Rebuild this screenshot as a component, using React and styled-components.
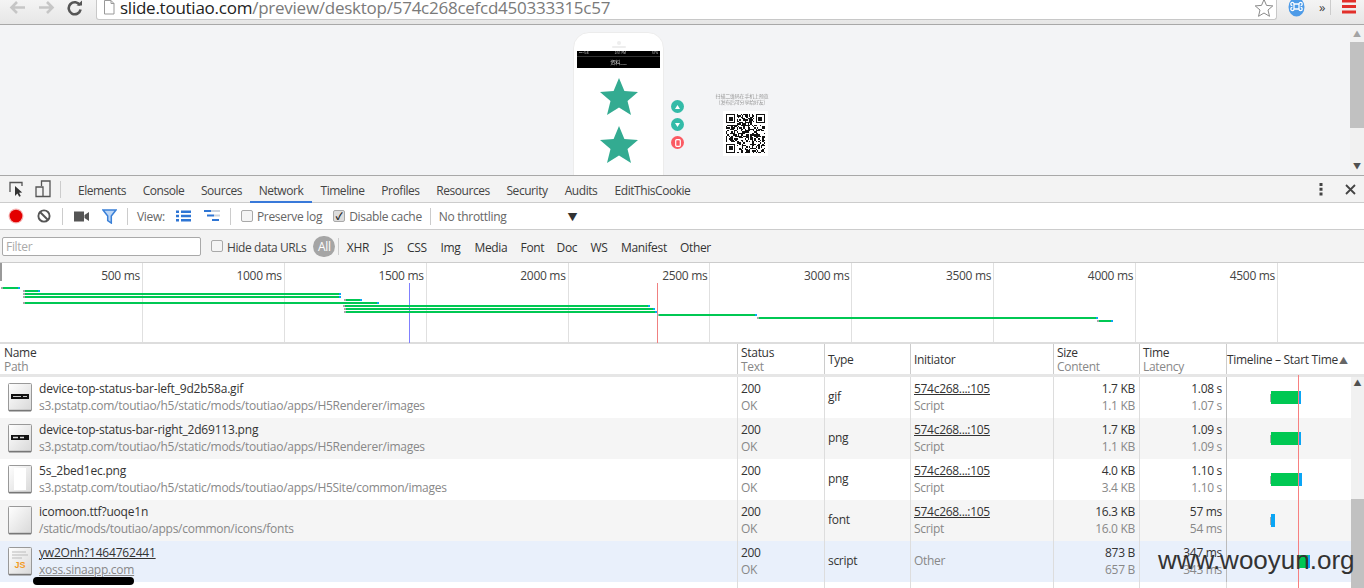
import React from "react";
import styled, { createGlobalStyle } from "styled-components";

const FONT = '"Open Sans", "Noto Sans CJK SC", sans-serif';

const GlobalStyle = createGlobalStyle`
html, body { margin: 0; padding: 0; height: 588px; overflow: hidden; background: #fff; }
body { font-family: ${FONT}; font-size: 12px; color: #333; }
* { box-sizing: border-box; }
svg { flex: none; }
`;

const Screen = styled.div`
position: relative;
width: 1364px;
height: 588px;
overflow: hidden;
display: flex;
flex-direction: column;
`;

/* browser chrome */
const BrowserBar = styled.div`
height: 25px;
display: flex;
align-items: flex-start;
background: linear-gradient(#f4f4f4, #e6e6e6);
border-bottom: 1px solid #a8a8a8;
`;
const NavIcons = styled.div`
width: 96px;
height: 15px;
flex: none;
display: flex;
align-items: center;
gap: 8px;
padding-left: 8px;
`;
const UrlBox = styled.div`
width: 1181px;
height: 20px;
flex: none;
background: #fff;
border: 1px solid #c8c8c8;
border-top: 0;
border-radius: 0 0 3px 3px;
display: flex;
align-items: center;
padding: 0 2px 4px 6px;
gap: 5px;
overflow: hidden;
`;
const UrlText = styled.div`
flex: 1;
font-size: 17px;
line-height: 15px;
color: #7a7a7a;
letter-spacing: -0.25px;
white-space: nowrap;
`;
const UrlHost = styled.span`
color: #222;
`;
const ExtIcons = styled.div`
flex: none;
width: 87px;
height: 15px;
display: flex;
align-items: center;
padding-left: 11px;
`;
const Chevrons = styled.span`
margin-left: 14px;
width: 12px;
flex: none;
font-size: 13px;
line-height: 15px;
color: #444;
border-right: 1px solid #ccc;
`;

/* inspected page */
const PageArea = styled.div`
height: 151px;
display: flex;
background: #f3f4f6;
border-bottom: 1px solid #a8a8a8;
overflow: hidden;
`;
const Preview = styled.div`
flex: 1;
display: flex;
align-items: flex-start;
padding: 7px 0 0 573px;
filter: blur(0.3px);
`;
const Phone = styled.div`
width: 91px;
height: 190px;
flex: none;
background: #fff;
border: 1px solid #ececec;
border-radius: 16px 16px 0 0;
padding: 0 3px;
display: flex;
flex-direction: column;
align-items: center;
`;
const Speaker = styled.div`
width: 14px;
height: 18px;
display: flex;
flex-direction: column;
align-items: center;
justify-content: flex-end;
padding-bottom: 3px;
gap: 1px;
&::before { content: ""; width: 4px; height: 4px; border-radius: 50%; background: #eee; }
&::after { content: ""; width: 14px; height: 2px; border-radius: 1px; background: #eee; }
`;
const PhoneHead = styled.div`
width: 100%;
height: 17px;
background: #000;
display: flex;
flex-direction: column;
align-items: center;
color: #ddd;
`;
const PhoneStatus = styled.div`
width: 100%;
height: 6px;
border-bottom: 1px solid #333;
display: flex;
justify-content: space-between;
align-items: center;
padding: 0 2px;
font-size: 3px;
line-height: 5px;
`;
const PhoneTitle = styled.div`
font-size: 5px;
line-height: 10px;
`;
const Stars = styled.div`
display: flex;
flex-direction: column;
gap: 11px;
padding-top: 10px;
`;
const SideButtons = styled.div`
margin: 68px 0 0 7px;
display: flex;
flex-direction: column;
gap: 5px;
`;
const RoundButton = styled.div`
width: 13px;
height: 13px;
border-radius: 50%;
background: ${p => p.$danger ? "#fb5a63" : "#33bba8"};
display: flex;
align-items: center;
justify-content: center;
`;
const QrColumn = styled.div`
width: 60px;
margin: 61px 0 0 31px;
display: flex;
flex-direction: column;
align-items: center;
`;
const QrCaption = styled.div`
font-size: 5px;
line-height: 6px;
color: #999;
letter-spacing: -0.2px;
text-align: center;
white-space: nowrap;
margin: 0 6px 6px 0;
filter: blur(0.3px);
`;
const QrBox = styled.div`
width: 45px;
height: 45px;
background: #fff;
padding: 3px;
display: flex;
`;
const PageScroll = styled.div`
width: 14px;
background: #f1f1f1;
display: flex;
flex-direction: column;
align-items: center;
`;
const ScrollThumb = styled.div`
width: 100%;
background: #c1c1c1;
height: ${p => p.$h}px;
margin-top: ${p => p.$top}px;
`;
const ScrollArrow = styled.div`
height: 11px;
line-height: 11px;
font-size: 8px;
color: ${p => p.$dim ? "#a3a3a3" : "#505050"};
margin-top: ${p => p.$top || 0}px;
`;

/* devtools */
const TabBar = styled.div`
height: 27px;
display: flex;
align-items: stretch;
background: #f3f3f3;
border-bottom: 1px solid #ccc;
padding-left: 8px;
`;
const IconSlot = styled.div`
width: ${p => p.$w}px;
display: flex;
align-items: center;
justify-content: center;
flex: none;
`;
const Sep = styled.div`
width: 1px;
height: 17px;
background: #ccc;
align-self: center;
flex: none;
margin: 0 ${p => p.$r || 0}px 0 ${p => p.$l || 0}px;
`;
const Tab = styled.div`
padding: 3px 8px 0;
display: flex;
align-items: center;
color: #444;
white-space: nowrap;
height: 27px;
letter-spacing: -0.45px;
border-bottom: 2px solid ${p => p.$active ? "#3879d9" : "transparent"};
width: ${p => p.$w}px;
justify-content: center;
`;
const TabRight = styled.div`
margin-left: auto;
display: flex;
align-items: center;
`;
const Toolbar = styled.div`
height: 27px;
display: flex;
align-items: center;
background: #fff;
border-bottom: 1px solid #ccc;
padding-left: 4px;
`;
const ToolLabel = styled.span`
color: ${p => p.$dim ? "#666" : "#444"};
white-space: nowrap;
letter-spacing: ${p => p.$tight ? "-0.42px" : "-0.3px"};
margin: ${p => p.$tight ? "2px" : "0"} ${p => p.$r || 0}px 0 ${p => p.$l || 0}px;
`;
const CheckBox = styled.span`
width: 12px;
height: 12px;
flex: none;
border: 1px solid #a9a9a9;
border-radius: 2px;
background: ${p => p.$on ? "#ddd" : "#f4f4f4"};
color: #222;
font-size: 10px;
line-height: 10px;
font-weight: 700;
text-align: center;
margin: 0 4px 0 ${p => p.$l || 0}px;
`;
const Caret = styled.span`
margin-left: 61px;
font-size: 10px;
color: #333;
`;
const FilterRow = styled.div`
height: 33px;
display: flex;
align-items: center;
background: #f3f3f3;
border-bottom: 1px solid #ccc;
padding-left: 2px;
`;
const FilterInput = styled.div`
width: 199px;
height: 19px;
background: #fff;
border: 1px solid #a9a9a9;
border-radius: 2px;
color: #aaa;
line-height: 17px;
padding-left: 3px;
letter-spacing: -0.3px;
`;
const AllPill = styled.div`
width: 22px;
height: 21px;
border-radius: 11px;
background: #a5a5a5;
color: #fff;
text-align: center;
line-height: 21px;
margin-left: 7px;
letter-spacing: -0.3px;
`;
const TypeFilter = styled.span`
color: #333;
letter-spacing: -0.35px;
width: ${p => p.$w}px;
margin-top: 2px;
text-align: center;
flex: none;
`;

const Overview = styled.div`
position: relative;
height: 81px;
display: flex;
background: #fff;
border-bottom: 2px solid #ddd;
padding-left: 1px;
`;
const OverviewCell = styled.div`
width: 141.9px;
flex: none;
border-right: 1px solid #e0e0e0;
text-align: right;
padding: 4px 2px 0 0;
color: #444;
line-height: 18px;
letter-spacing: -0.3px;
`;
const Waterfall = styled.svg`
position: absolute;
left: 0;
top: 0;
`;

const COLUMNS = "737px 87px 86px 143px 86px 87px 125px";

const TableHead = styled.div`
display: flex;
height: 33px;
background: #fff;
border-bottom: 3px solid #e6e6e6;
`;
const HeadGrid = styled.div`
display: grid;
grid-template-columns: ${COLUMNS};
flex: none;
`;
const HeadCell = styled.div`
border-left: ${p => p.$first ? "0" : "1px solid #ccc"};
padding: 2px 0 0 ${p => p.$first ? "4px" : p.$flush ? "0" : "3px"};
display: flex;
flex-direction: column;
justify-content: center;
color: #333;
line-height: 14px;
letter-spacing: -0.3px;
white-space: nowrap;
`;
const SubLabel = styled.span`
color: #888;
`;
const SortMark = styled.span`
font-size: 9px;
color: #666;
margin-left: 1px;
`;
const TableArea = styled.div`
position: relative;
flex: 1;
display: flex;
min-height: 0;
`;
const Rows = styled.div`
width: 1351px;
flex: none;
background: #fff;
`;
const Row = styled.div`
display: grid;
grid-template-columns: ${COLUMNS};
height: 41px;
background: ${p => p.$selected ? "#e9f0fb" : p.$alt ? "#f5f5f5" : "#fff"};
`;
const Cell = styled.div`
border-left: 1px solid #ddd;
padding: 0 4px 2px 3px;
display: flex;
flex-direction: column;
justify-content: center;
line-height: 17px;
letter-spacing: -0.3px;
white-space: nowrap;
text-align: ${p => p.$right ? "right" : "left"};
`;
const NameCell = styled.div`
display: flex;
align-items: center;
padding-left: 8px;
gap: 7px;
`;
const NameStack = styled.div`
display: flex;
flex-direction: column;
padding-bottom: 2px;
line-height: 17px;
white-space: nowrap;
letter-spacing: -0.27px;
`;
const Main = styled.span`
color: #333;
text-decoration: ${p => p.$link ? "underline" : "none"};
`;
const FileName = styled(Main)`
letter-spacing: -0.2px;
`;
const Sub = styled.span`
color: #888;
text-decoration: ${p => p.$link ? "underline" : "none"};
`;
const EmptyRest = styled.div`
display: grid;
grid-template-columns: ${COLUMNS};
height: 10px;
`;
const EmptyCol = styled.div`
border-left: ${p => p.$first ? "0" : "1px solid #ddd"};
`;
const BarCell = styled.div`
border-left: 1px solid #bbb;
display: flex;
align-items: center;
padding-left: ${p => p.$pad}px;
`;
const BarPart = styled.div`
height: ${p => p.$h || 13}px;
width: ${p => p.$w}px;
background: ${p => p.$c};
`;
const StartLine = styled.div`
position: absolute;
left: 1298px;
top: -2px;
bottom: 0;
width: 1px;
background: #f78080;
`;
const TableScroll = styled.div`
width: 13px;
background: #f1f1f1;
display: flex;
flex-direction: column;
align-items: center;
`;
const TableThumb = styled.div`
width: 100%;
height: 91px;
margin-top: 111px;
background: #c1c1c1;
`;
const Watermark = styled.div`
position: absolute;
left: 1158px;
top: 544px;
font-family: "Liberation Sans", sans-serif;
font-size: 26px;
line-height: 32px;
color: #333;
white-space: nowrap;
`;
const Scribble = styled.div`
position: absolute;
left: 33px;
top: 577px;
width: 101px;
height: 8px;
border-radius: 4px;
background: #000;
`;

const BackArrow = ({ flip }) => (
  <svg width="20" height="15" viewBox="0 0 20 15" style={flip ? { transform: "scaleX(-1)" } : undefined}>
    <path d="M9 2 L3.5 7.5 L9 13 M4 7.5 H17" fill="none" stroke="#c6c6c6" strokeWidth="2.6" />
  </svg>
);
const Reload = () => (
  <svg width="16" height="16" viewBox="0 0 16 16">
    <path d="M13 5.4 A6 6 0 1 0 13.6 9.5" fill="none" stroke="#555" strokeWidth="2.6" />
    <path d="M9.5 5.6 H15 V0.5 Z" fill="#555" />
  </svg>
);
const PageGlyph = () => (
  <svg width="12" height="15" viewBox="0 0 12 15">
    <path d="M1.5 .5 H8 L11 3.5 V14 H1.5 Z M8 .5 V3.5 H11" fill="#fff" stroke="#999" />
  </svg>
);
const BookmarkStar = () => (
  <svg width="20" height="20" viewBox="0 0 20 20">
    <path d="M10 1.5 L12.5 7.4 L18.8 7.9 L14 12 L15.5 18.3 L10 15 L4.5 18.3 L6 12 L1.2 7.9 L7.5 7.4 Z" fill="#fff" stroke="#8a8a8a" />
  </svg>
);
const ExtBadge = () => (
  <svg width="17" height="20" viewBox="0 0 17 20">
    <ellipse cx="8.5" cy="9" rx="8" ry="9.5" fill="#4d9be8" />
    <path d="M6 6 H11 V11 H6 Z M6 6 A1.6 1.6 0 1 0 4.4 7.6 M11 6 A1.6 1.6 0 1 1 12.6 7.6 M6 11 A1.6 1.6 0 1 1 4.4 9.4 M11 11 A1.6 1.6 0 1 0 12.6 9.4" fill="none" stroke="#fff" strokeWidth="1.3" />
  </svg>
);
const RedMenu = () => (
  <svg width="14" height="15" viewBox="0 0 14 15">
    <path d="M0 0 H14 V2.5 H0 Z M0 5 H14 V8 H0 Z M0 10.5 H14 V13.5 H0 Z" fill="#e2302b" />
  </svg>
);
const StarShape = () => (
  <svg width="38" height="37" viewBox="0 0 38 37">
    <path d="M19 0 L24.4 13 L38 14 L27.5 23 L31 37 L19 29.5 L7 37 L10.5 23 L0 14 L13.6 13 Z" fill="#33ab91" />
  </svg>
);
const UpGlyph = () => <svg width="5" height="4" viewBox="0 0 5 4"><path d="M2.5 0 L5 4 H0 Z" fill="#fff" /></svg>;
const DownGlyph = () => <svg width="5" height="4" viewBox="0 0 5 4"><path d="M0 0 H5 L2.5 4 Z" fill="#fff" /></svg>;
const PhoneGlyph = () => <svg width="6" height="8" viewBox="0 0 6 8"><rect x=".7" y=".7" width="4.6" height="6.6" rx="1" fill="none" stroke="#fff" strokeWidth="1.2" /></svg>;

const qrCells = (() => {
  const n = 29;
  const cells = [];
  let seed = 73;
  const inFinder = (x, y) => (x < 8 && y < 8) || (x > n - 9 && y < 8) || (x < 8 && y > n - 9);
  for (let y = 0; y < n; y++) {
    for (let x = 0; x < n; x++) {
      seed = (seed * 137 + 29) % 1021;
      if (!inFinder(x, y) && seed % 2 === 0) cells.push([x, y]);
    }
  }
  return cells;
})();

const QrCode = () => (
  <svg width="39" height="39" viewBox="0 0 29 29" shapeRendering="crispEdges">
    {qrCells.map(([x, y]) => <rect key={`${x}-${y}`} x={x} y={y} width="1" height="1" fill="#111" />)}
    {[[0, 0], [22, 0], [0, 22]].map(([x, y]) => (
      <path key={x + "f" + y} d={`M${x} ${y}h7v7h-7z M${x + 1} ${y + 1}v5h5v-5z M${x + 2} ${y + 2}h3v3h-3z`} fill="#111" fillRule="evenodd" />
    ))}
  </svg>
);

const InspectIcon = () => (
  <svg width="16" height="16" viewBox="0 0 16 16">
    <path d="M1 11 V1.5 H13 V5" fill="none" stroke="#555" strokeWidth="1.3" />
    <path d="M6 5 L6 15 L8.4 12.6 L10.2 15.8 L11.8 14.9 L10.1 11.8 L13.2 11.4 Z" fill="#333" />
  </svg>
);
const DeviceIcon = () => (
  <svg width="16" height="18" viewBox="0 0 16 18">
    <path d="M6.5 6 V1 H15 V16.5 H6.5 M1 7 H8 V16.5 H1 Z" fill="none" stroke="#555" strokeWidth="1.3" />
  </svg>
);
const DotsIcon = () => (
  <svg width="4" height="14" viewBox="0 0 4 14">
    <path d="M.5 1h3v3h-3z M.5 5.7h3v3h-3z M.5 10.4h3v3h-3z" fill="#444" />
  </svg>
);
const CloseIcon = () => (
  <svg width="11" height="11" viewBox="0 0 11 11">
    <path d="M1 1 L10 10 M10 1 L1 10" stroke="#444" strokeWidth="1.8" />
  </svg>
);
const RecordIcon = () => (
  <svg width="16" height="16" viewBox="0 0 16 16">
    <circle cx="8" cy="8" r="7.5" fill="#f5b5b5" />
    <circle cx="8" cy="8" r="6.3" fill="#e30000" />
  </svg>
);
const ClearIcon = () => (
  <svg width="14" height="14" viewBox="0 0 14 14">
    <circle cx="7" cy="7" r="5.6" fill="none" stroke="#555" strokeWidth="1.9" />
    <path d="M3 3 L11 11" stroke="#555" strokeWidth="1.9" />
  </svg>
);
const CameraIcon = () => (
  <svg width="15" height="11" viewBox="0 0 15 11">
    <path d="M0 .5 H10 V10.5 H0 Z M10.5 4 L15 1 V10 L10.5 7 Z" fill="#555" />
  </svg>
);
const FunnelIcon = () => (
  <svg width="15" height="15" viewBox="0 0 15 15">
    <path d="M1 1 H14 L9.3 7 V14 L5.7 11.5 V7 Z" fill="#bcd6f5" stroke="#3a80d8" strokeWidth="1.5" />
  </svg>
);
const ListIcon = () => (
  <svg width="15" height="12" viewBox="0 0 15 12">
    <path d="M0 .5h3v2.5h-3z M5 .5h10v2.5h-10z M0 4.7h3v2.5h-3z M5 4.7h10v2.5h-10z M0 9h3v2.5h-3z M5 9h10v2.5h-10z" fill="#2e75d4" />
  </svg>
);
const TreeIcon = () => (
  <svg width="16" height="12" viewBox="0 0 16 12">
    <path d="M0 0h7v2h-7z M3 4.5h7v2h-7z M8 9h7v2h-7z" fill="#2e75d4" />
    <path d="M7 0h9v2h-9z M10 4.5h6v2h-6z" fill="#c9d3df" />
  </svg>
);

const FileIcon = ({ kind }) => (
  <svg width="24" height="29" viewBox="0 0 24 29">
    <defs>
      <linearGradient id={"paper" + kind} x1="0" y1="0" x2="1" y2="1">
        <stop offset="0" stopColor="#fff" />
        <stop offset="1" stopColor="#d8d8d8" />
      </linearGradient>
    </defs>
    <rect x=".5" y=".5" width="23" height="27.5" rx="1" fill={`url(#paper${kind})`} stroke="#999" />
    <path d="M1 27.5 H23" stroke="#777" strokeWidth="1.4" />
    {kind === "left" && <g><rect x="3" y="11" width="18" height="5" fill="#111" /><path d="M5 13.5h8 M15 13.5h4" stroke="#ccc" /></g>}
    {kind === "right" && <g><rect x="3" y="11" width="18" height="5" fill="#111" /><path d="M5 13.5h5 M12 13.5h4" stroke="#ddd" strokeWidth="1.4" /></g>}
    {kind === "frame" && <rect x="6" y="3" width="12" height="22" fill="#fff" />}
    {kind === "js" && (
      <g>
        <path d="M4 5h14 M4 8h16 M4 11h10" stroke="#bbb" />
        <text x="12" y="21" textAnchor="middle" fontFamily="Liberation Sans, sans-serif" fontSize="9" fontWeight="700" fill="#f39a1f">JS</text>
      </g>
    )}
  </svg>
);

const TABS = [
  ["Elements", 64], ["Console", 59], ["Sources", 57], ["Network", 62], ["Timeline", 61],
  ["Profiles", 55], ["Resources", 70], ["Security", 58], ["Audits", 50], ["EditThisCookie", 93],
];
const TYPES = [
  ["XHR", 37], ["JS", 24], ["CSS", 33], ["Img", 34], ["Media", 47], ["Font", 36], ["Doc", 33], ["WS", 31], ["Manifest", 59], ["Other", 44],
];
const MARKS = ["500 ms", "1000 ms", "1500 ms", "2000 ms", "2500 ms", "3000 ms", "3500 ms", "4000 ms", "4500 ms", ""];

// start, end, y of each bar in the overview
const OVERVIEW_BARS = [
  [1, 20, 287], [23, 40, 290], [23, 341, 293], [23, 341, 296], [344, 362, 299], [23, 379, 302],
  [343, 650, 305], [344, 655, 308], [344, 657, 311], [657, 757, 314], [757, 1098, 317], [1097, 1113, 320],
];

const ROWS = [
  { icon: "left", name: "device-top-status-bar-left_9d2b58a.gif", path: "s3.pstatp.com/toutiao/h5/static/mods/toutiao/apps/H5Renderer/images", type: "gif", size: "1.7 KB", content: "1.1 KB", time: "1.08 s", latency: "1.07 s", pad: 43, gray: 1, green: 28, blue: 2 },
  { icon: "right", name: "device-top-status-bar-right_2d69113.png", path: "s3.pstatp.com/toutiao/h5/static/mods/toutiao/apps/H5Renderer/images", type: "png", size: "1.7 KB", content: "1.1 KB", time: "1.09 s", latency: "1.09 s", pad: 43, gray: 1, green: 28, blue: 2 },
  { icon: "frame", name: "5s_2bed1ec.png", path: "s3.pstatp.com/toutiao/h5/static/mods/toutiao/apps/H5Site/common/images", type: "png", size: "4.0 KB", content: "3.4 KB", time: "1.10 s", latency: "1.10 s", pad: 43, gray: 1, green: 28, blue: 3 },
  { icon: "blank", name: "icomoon.ttf?uoqe1n", path: "/static/mods/toutiao/apps/common/icons/fonts", type: "font", size: "16.3 KB", content: "16.0 KB", time: "57 ms", latency: "54 ms", pad: 43, gray: 1, green: 0, blue: 4 },
  { icon: "js", name: "yw2Onh?1464762441", path: "xoss.sinaapp.com", type: "script", size: "873 B", content: "657 B", time: "347 ms", latency: "343 ms", pad: 72, gray: 0, green: 9, blue: 2, other: true },
];

const App = () => (
  <Screen>
    <GlobalStyle />
    <BrowserBar>
      <NavIcons>
        <BackArrow />
        <BackArrow flip />
        <IconSlot $w={22}><Reload /></IconSlot>
      </NavIcons>
      <UrlBox>
        <PageGlyph />
        <UrlText><UrlHost>slide.toutiao.com</UrlHost>/preview/desktop/574c268cefcd450333315c57</UrlText>
        <BookmarkStar />
      </UrlBox>
      <ExtIcons>
        <ExtBadge />
        <Chevrons>»</Chevrons>
        <IconSlot $w={36}><RedMenu /></IconSlot>
      </ExtIcons>
    </BrowserBar>

    <PageArea>
      <Preview>
        <Phone>
          <Speaker />
          <PhoneHead>
            <PhoneStatus><span>•••• 5:8</span><span>2:51 PM</span><span>57%</span></PhoneStatus>
            <PhoneTitle>资料___</PhoneTitle>
          </PhoneHead>
          <Stars>
            <StarShape />
            <StarShape />
          </Stars>
        </Phone>
        <SideButtons>
          <RoundButton><UpGlyph /></RoundButton>
          <RoundButton><DownGlyph /></RoundButton>
          <RoundButton $danger><PhoneGlyph /></RoundButton>
        </SideButtons>
        <QrColumn>
          <QrCaption>扫描二维码在手机上预览<br />（发布后可分享给好友）</QrCaption>
          <QrBox><QrCode /></QrBox>
        </QrColumn>
      </Preview>
      <PageScroll>
        <ScrollArrow $dim $top={3}>▲</ScrollArrow>
        <ScrollThumb $h={86} $top={3} />
        <ScrollArrow $top={32}>▼</ScrollArrow>
      </PageScroll>
    </PageArea>

    <TabBar>
      <IconSlot $w={18}><InspectIcon /></IconSlot>
      <IconSlot $w={34}><DeviceIcon /></IconSlot>
      <Sep $r={9} />
      {TABS.map(([label, w]) => <Tab key={label} $w={w} $active={label === "Network"}>{label}</Tab>)}
      <TabRight>
        <IconSlot $w={30}><DotsIcon /></IconSlot>
        <IconSlot $w={28}><CloseIcon /></IconSlot>
      </TabRight>
    </TabBar>

    <Toolbar>
      <IconSlot $w={24}><RecordIcon /></IconSlot>
      <IconSlot $w={32}><ClearIcon /></IconSlot>
      <Sep $l={2} />
      <IconSlot $w={37}><CameraIcon /></IconSlot>
      <IconSlot $w={19}><FunnelIcon /></IconSlot>
      <Sep $l={8} />
      <ToolLabel $dim $l={9}>View:</ToolLabel>
      <IconSlot $w={38}><ListIcon /></IconSlot>
      <IconSlot $w={18}><TreeIcon /></IconSlot>
      <Sep $l={9} />
      <CheckBox $l={10} />
      <ToolLabel $dim>Preserve log</ToolLabel>
      <CheckBox $l={11} $on>✓</CheckBox>
      <ToolLabel $dim>Disable cache</ToolLabel>
      <Sep $l={8} />
      <ToolLabel $dim $l={8}>No throttling</ToolLabel>
      <Caret>▼</Caret>
    </Toolbar>

    <FilterRow>
      <FilterInput>Filter</FilterInput>
      <CheckBox $l={10} />
      <ToolLabel $tight>Hide data URLs</ToolLabel>
      <AllPill>All</AllPill>
      <Sep $l={3} $r={0} />
      {TYPES.map(([label, w]) => <TypeFilter key={label} $w={w}>{label}</TypeFilter>)}
    </FilterRow>

    <Overview>
      {MARKS.map((m, i) => <OverviewCell key={i}>{m}</OverviewCell>)}
      <Waterfall width="1364" height="80" viewBox="0 263 1364 80">
        <rect x="0" y="263" width="2" height="18" fill="#999" />
        <path d="M409.5 283 V343" stroke="#8080ff" />
        <path d="M657.5 283 V343" stroke="#f08080" />
        {OVERVIEW_BARS.map(([a, b, y]) => (
          <g key={a + "-" + y}>
            <rect x={a} y={y} width={b - a} height="2" fill="#00c853" />
            <rect x={a} y={y} width="2" height="2" fill="#a8a8a8" />
            <rect x={b - 2} y={y} width="2" height="2" fill="#0aa5f5" />
          </g>
        ))}
      </Waterfall>
    </Overview>

    <TableHead>
      <HeadGrid>
        <HeadCell $first><span>Name</span><SubLabel>Path</SubLabel></HeadCell>
        <HeadCell><span>Status</span><SubLabel>Text</SubLabel></HeadCell>
        <HeadCell><span>Type</span></HeadCell>
        <HeadCell><span>Initiator</span></HeadCell>
        <HeadCell><span>Size</span><SubLabel>Content</SubLabel></HeadCell>
        <HeadCell><span>Time</span><SubLabel>Latency</SubLabel></HeadCell>
        <HeadCell $flush><span>Timeline – Start Time<SortMark>▲</SortMark></span></HeadCell>
      </HeadGrid>
    </TableHead>

    <TableArea>
      <Rows>
        {ROWS.map((r, i) => (
          <Row key={r.name} $alt={i % 2 === 1} $selected={i === 4}>
            <NameCell>
              <FileIcon kind={r.icon} />
              <NameStack>
                <FileName $link={r.other}>{r.name}</FileName>
                <Sub $link={r.other}>{r.path}</Sub>
              </NameStack>
            </NameCell>
            <Cell><Main>200</Main><Sub>OK</Sub></Cell>
            <Cell><Main>{r.type}</Main></Cell>
            {r.other
              ? <Cell><Sub>Other</Sub></Cell>
              : <Cell><Main $link>574c268...:105</Main><Sub>Script</Sub></Cell>}
            <Cell $right><Main>{r.size}</Main><Sub>{r.content}</Sub></Cell>
            <Cell $right><Main>{r.time}</Main><Sub>{r.latency}</Sub></Cell>
            <BarCell $pad={r.pad}>
              <BarPart $w={r.gray} $h={8} $c="#a8a8a8" />
              <BarPart $w={r.green} $c="#00c853" />
              <BarPart $w={r.blue} $c="#0aa5f5" />
            </BarCell>
          </Row>
        ))}
        <EmptyRest>
          <EmptyCol $first /><EmptyCol /><EmptyCol /><EmptyCol /><EmptyCol /><EmptyCol /><EmptyCol />
        </EmptyRest>
      </Rows>
      <TableScroll>
        <ScrollArrow>▲</ScrollArrow>
        <TableThumb />
      </TableScroll>
      <StartLine />
    </TableArea>

    <Scribble />
    <Watermark>www.wooyun.org</Watermark>
  </Screen>
);

export default App;
